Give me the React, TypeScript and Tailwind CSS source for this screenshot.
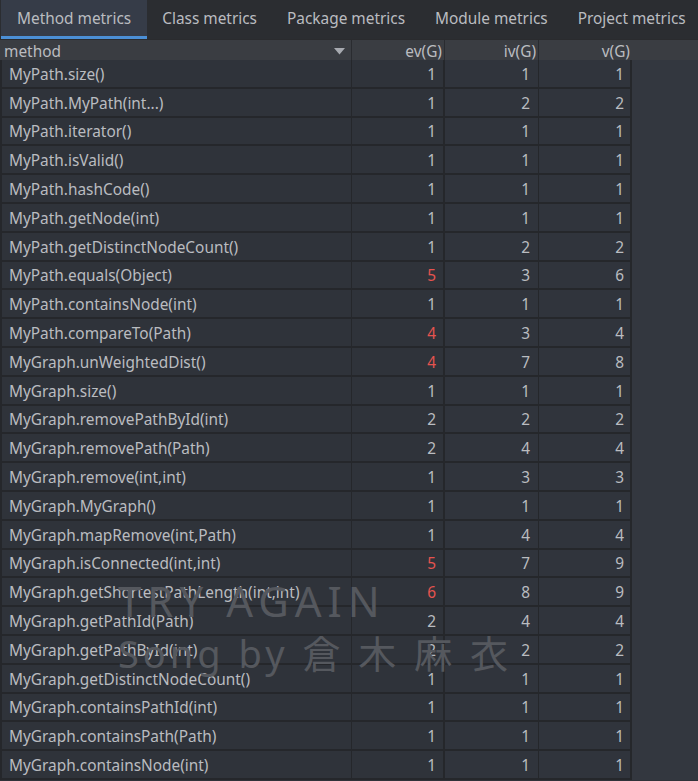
const tabs = ["Method metrics", "Class metrics", "Package metrics", "Module metrics", "Project metrics"];

type Row = { name: string; ev: number; iv: number; v: number };

const rows: Row[] = [
  { name: "MyPath.size()", ev: 1, iv: 1, v: 1 },
  { name: "MyPath.MyPath(int...)", ev: 1, iv: 2, v: 2 },
  { name: "MyPath.iterator()", ev: 1, iv: 1, v: 1 },
  { name: "MyPath.isValid()", ev: 1, iv: 1, v: 1 },
  { name: "MyPath.hashCode()", ev: 1, iv: 1, v: 1 },
  { name: "MyPath.getNode(int)", ev: 1, iv: 1, v: 1 },
  { name: "MyPath.getDistinctNodeCount()", ev: 1, iv: 2, v: 2 },
  { name: "MyPath.equals(Object)", ev: 5, iv: 3, v: 6 },
  { name: "MyPath.containsNode(int)", ev: 1, iv: 1, v: 1 },
  { name: "MyPath.compareTo(Path)", ev: 4, iv: 3, v: 4 },
  { name: "MyGraph.unWeightedDist()", ev: 4, iv: 7, v: 8 },
  { name: "MyGraph.size()", ev: 1, iv: 1, v: 1 },
  { name: "MyGraph.removePathById(int)", ev: 2, iv: 2, v: 2 },
  { name: "MyGraph.removePath(Path)", ev: 2, iv: 4, v: 4 },
  { name: "MyGraph.remove(int,int)", ev: 1, iv: 3, v: 3 },
  { name: "MyGraph.MyGraph()", ev: 1, iv: 1, v: 1 },
  { name: "MyGraph.mapRemove(int,Path)", ev: 1, iv: 4, v: 4 },
  { name: "MyGraph.isConnected(int,int)", ev: 5, iv: 7, v: 9 },
  { name: "MyGraph.getShortestPathLength(int,int)", ev: 6, iv: 8, v: 9 },
  { name: "MyGraph.getPathId(Path)", ev: 2, iv: 4, v: 4 },
  { name: "MyGraph.getPathById(int)", ev: 2, iv: 2, v: 2 },
  { name: "MyGraph.getDistinctNodeCount()", ev: 1, iv: 1, v: 1 },
  { name: "MyGraph.containsPathId(int)", ev: 1, iv: 1, v: 1 },
  { name: "MyGraph.containsPath(Path)", ev: 1, iv: 1, v: 1 },
  { name: "MyGraph.containsNode(int)", ev: 1, iv: 1, v: 1 },
];

const grid = "grid grid-cols-[352px_93px_94px_93px_1fr]";

export default function App() {
  return (
    <div
      className="relative w-[698px] h-[781px] overflow-hidden bg-[#2f3239] text-[#babcc0] text-[15.4px]"
      style={{ fontFamily: '"Noto Sans", "Open Sans", sans-serif' }}
    >
      <div className="flex h-[39px] bg-[#2b2d31] text-[15.4px] overflow-hidden">
        {tabs.map((t, i) => (
          <div
            key={t}
            className={
              i === 0
                ? "flex shrink-0 items-center whitespace-nowrap px-[16px] pt-[1px] bg-[#363c48] border-b-[3px] border-[#4b8fd6] ml-[1px]"
                : "flex shrink-0 items-center whitespace-nowrap px-[15px] pb-[2px]"
            }
          >
            {t}
          </div>
        ))}
      </div>

      <div className={`${grid} h-[21px] bg-[#3a3d42] border-t border-[#2a2b2e]`}>
        <div className="flex items-center justify-between pl-[4px] pr-[6px] border-r border-[#2a2c30]">
          <span className="leading-none">method</span>
          <svg width="11" height="7" viewBox="0 0 11 7">
            <path d="M0 0 H11 L5.5 6.5 Z" fill="#a7aab0" />
          </svg>
        </div>
        <div className="flex items-center justify-end pr-[2px] border-r border-[#2a2c30]">ev(G)</div>
        <div className="flex items-center justify-end pr-[2px] border-r border-[#2a2c30]">iv(G)</div>
        <div className="flex items-center justify-end pr-[2px]">v(G)</div>
        <div />
      </div>

      {rows.map((r) => (
        <div key={r.name} className={`${grid} h-[28.8px]`}>
          <div className="flex items-center pt-[2px] pl-[7px] border-b-2 border-l-2 border-r border-[#25272b] bg-[#2f333a]">
            {r.name}
          </div>
          <div
            className={`flex items-center justify-end pt-[2px] pr-[7px] border-b-2 border-r-2 border-[#25272b] bg-[#2f333a] ${
              r.ev > 3 ? "text-[#e5534f]" : ""
            }`}
          >
            {r.ev}
          </div>
          <div className="flex items-center justify-end pt-[2px] pr-[8px] border-b-2 border-r border-[#25272b] bg-[#30343c]">
            {r.iv}
          </div>
          <div className="flex items-center justify-end pt-[2px] pr-[6px] border-b-2 border-r-2 border-[#25272b] bg-[#30343c]">
            {r.v}
          </div>
          <div className="bg-[#33373f]" />
        </div>
      ))}

      <div
        className="pointer-events-none absolute left-[118px] top-[580px] text-[#55585e] leading-none"
        style={{ fontFamily: '"Noto Sans", "Noto Sans CJK JP", sans-serif' }}
      >
        <div className="text-[42px] tracking-[6px]">TRY AGAIN</div>
        <div className="mt-[12px] text-[38px] tracking-[4px] whitespace-pre">Song by 倉 木 麻 衣</div>
      </div>
    </div>
  );
}
